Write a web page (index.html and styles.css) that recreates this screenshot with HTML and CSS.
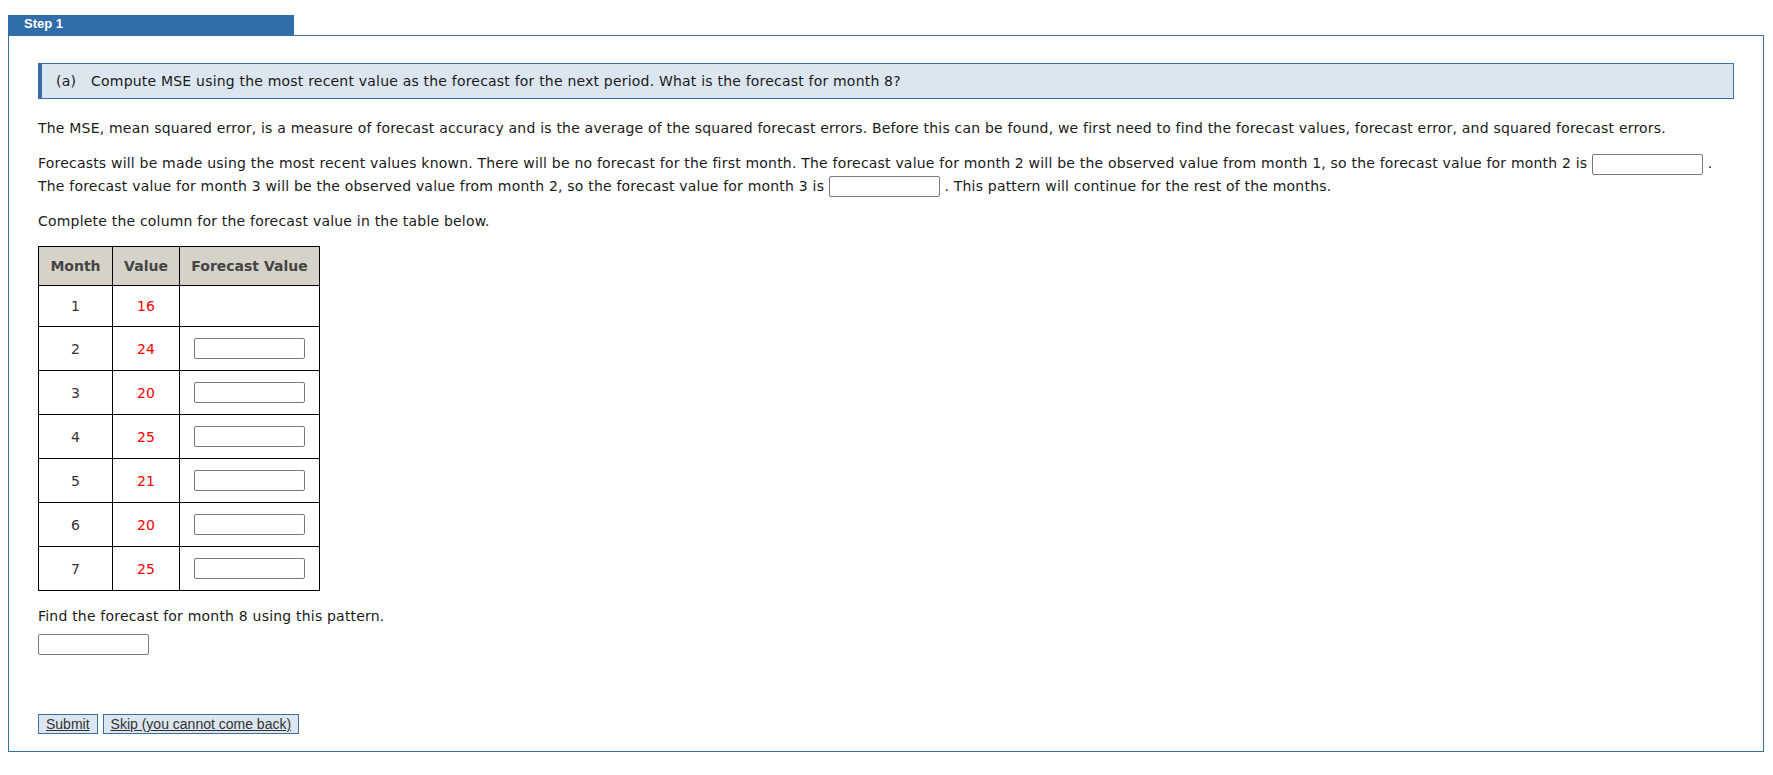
FILE: index.html
```html
<!DOCTYPE html>
<html lang="en">
  <head>
    <meta charset="UTF-8" />
    <title>Step 1</title>
    <link rel="stylesheet" href="styles.css">
  </head>
  <body>
    <div class="step">
      <div class="step-tab">Step 1</div>
      <div class="step-box">
        <div class="question">
          <span class="part">(a)</span>Compute MSE using the most recent value as the forecast for the next period. What is the forecast for month 8?
        </div>

        <p class="first">The MSE, mean squared error, is a measure of forecast accuracy and is the average of the squared forecast errors. Before this can be found, we first need to find the forecast values, forecast error, and squared forecast errors.</p>

        <p>Forecasts will be made using the most recent values known. There will be no forecast for the first month. The forecast value for month 2 will be the observed value from month 1, so the forecast value for month 2 is <input class="answer" type="text"> . The forecast value for month 3 will be the observed value from month 2, so the forecast value for month 3 is <input class="answer" type="text"> . This pattern will continue for the rest of the months.</p>

        <p>Complete the column for the forecast value in the table below.</p>

        <table class="data-table">
          <thead>
            <tr>
              <th class="col-month">Month</th>
              <th class="col-value">Value</th>
              <th class="col-forecast">Forecast Value</th>
            </tr>
          </thead>
          <tbody id="rows"></tbody>
        </table>

        <p class="find">Find the forecast for month 8 using this pattern.</p>
        <input class="answer block" type="text">

        <div class="actions">
          <button class="btn">Submit</button>
          <button class="btn">Skip (you cannot come back)</button>
        </div>
      </div>
    </div>

    <script>
      const values = [16, 24, 20, 25, 21, 20, 25]
      const tbody = document.getElementById('rows')

      values.forEach((value, i) => {
        const row = document.createElement('tr')
        const input = i === 0 ? '' : '<input class="answer block" type="text">'
        row.innerHTML = `
          <td class="month">${i + 1}</td>
          <td class="value">${value}</td>
          <td class="forecast">${input}</td>
        `
        tbody.appendChild(row)
      })
    </script>
  </body>
</html>
```

FILE: styles.css
```css
body {
  margin: 15px 9px 0 8px;
  background: #fff;
  color: #1a1a1a;
  font-family: "DejaVu Sans", Verdana, sans-serif;
  font-size: 14px;
  letter-spacing: 0.2px;
}

.step-tab {
  width: 270px;
  height: 20px;
  padding-left: 16px;
  background: #2f6eaa;
  color: #fff;
  font-family: "Liberation Sans", Arial, sans-serif;
  font-weight: bold;
  font-size: 13px;
  letter-spacing: 0;
  line-height: 18px;
}

.step-box {
  border: 1px solid #3a6ea5;
  padding: 27px 29px 17px 29px;
}

.question {
  background: #dbe6f0;
  border: 1px solid #3a6ea5;
  border-left-width: 4px;
  padding: 9px 14px;
  line-height: 16px;
}

.question .part {
  margin-right: 15px;
}

p {
  margin: 13px 0 0;
  line-height: 22px;
}

p.first {
  margin-top: 18px;
}

.answer {
  box-sizing: border-box;
  width: 111px;
  height: 21px;
  border: 1px solid #7a7a7a;
  border-radius: 2px;
  vertical-align: middle;
  font: inherit;
  margin: 0;
}

.answer.block {
  display: block;
}

.data-table {
  border-collapse: collapse;
  margin-top: 14px;
  border: 1px solid #000;
}

.data-table th,
.data-table td {
  border: 1px solid #000;
  text-align: center;
  padding: 11px 0;
  line-height: 16px;
}

.data-table th {
  background: #d6d2c8;
  color: #444;
  font-weight: bold;
  letter-spacing: 0;
}

.data-table td {
  line-height: 18px;
}

.col-month {
  width: 73px;
}

.col-value {
  width: 66px;
}

.col-forecast {
  width: 139px;
}

.data-table td.month {
  color: #333;
}

.data-table td.value {
  color: #ff0000;
}

.data-table td.forecast {
  padding: 11px 14px 11px 14px;
}

p.find {
  margin-top: 14px;
}

.find + .answer {
  margin-top: 7px;
}

.actions {
  display: flex;
  gap: 5px;
  margin-top: 59px;
}

.btn {
  background: #dbe6f0;
  border: 1px solid #3a6ea5;
  color: #333;
  font-family: "Liberation Sans", Arial, sans-serif;
  font-size: 14px;
  letter-spacing: 0;
  text-decoration: underline;
  padding: 1px 7px;
  height: 20px;
  line-height: 16px;
  cursor: pointer;
}
```
